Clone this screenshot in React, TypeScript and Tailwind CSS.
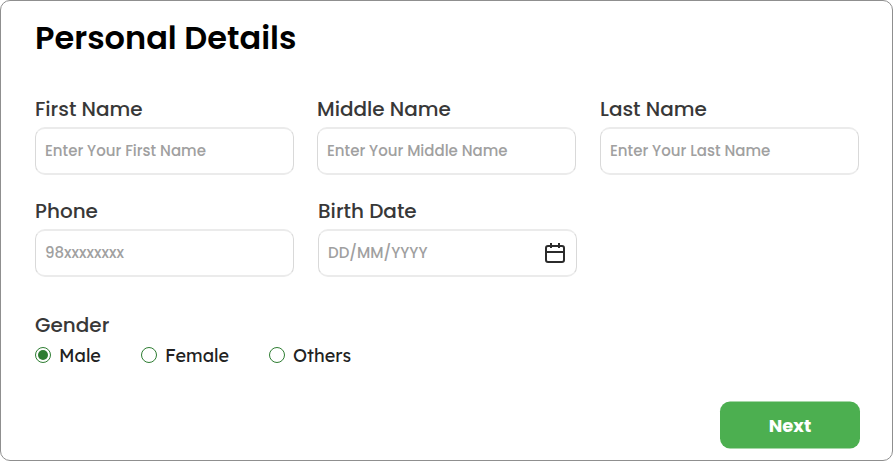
import type { ReactNode } from 'react';

type FieldProps = {
  label: string;
  placeholder: string;
  children?: ReactNode;
};

function Field({ label, placeholder, children }: FieldProps) {
  return (
    <label className="block w-[259px]">
      <span className="block h-[30px] whitespace-nowrap text-[20px] leading-[30px] font-medium text-[#383838]">{label}</span>
      <span className="mt-[3px] flex h-12 items-center rounded-[10px] border-x border-y-2 border-x-[#d9d9d9] border-y-[#ebebeb] pr-[11px] pl-[9px]">
        <input
          className="mb-0.5 h-6 w-0 min-w-0 flex-1 bg-transparent text-[15px] font-medium outline-none placeholder:text-[#a0a0a0]"
          placeholder={placeholder}
        />
        {children}
      </span>
    </label>
  );
}

function CalendarIcon() {
  return (
    <svg className="size-5 shrink-0" viewBox="0 0 20 20" fill="none" stroke="#2b2b2b" strokeWidth="2">
      <rect x="1" y="3" width="18" height="16" rx="2" />
      <path d="M1 9H19M6 0V5M14 0V5" />
    </svg>
  );
}

function Radio({ label, checked, className }: { label: string; checked?: boolean; className: string }) {
  return (
    <label className={`flex items-center gap-2 whitespace-nowrap ${className}`}>
      <svg className="size-4 shrink-0" viewBox="0 0 16 16" fill="none">
        <circle cx="8" cy="8" r="7.5" stroke="#2e7d32" />
        {checked && <circle cx="8" cy="8" r="5" fill="#2e7d32" />}
      </svg>
      <span className="pt-0.5 font-['Lexend','Outfit','Poppins',sans-serif] text-[18px] leading-[22px] font-normal text-[#222]">{label}</span>
    </label>
  );
}

export default function App() {
  return (
    <form className="h-[461px] w-[893px] rounded-[10px] border border-[#8f8f8f] bg-white pt-[13px] pl-[34px] font-['Poppins','Inter',sans-serif]">
      <h1 className="h-12 text-[32px] leading-12 font-semibold text-black">Personal Details</h1>
      <div className="mt-8 flex">
        <Field label="First Name" placeholder="Enter Your First Name" />
        <div className="mr-6 ml-[23px]">
          <Field label="Middle Name" placeholder="Enter Your Middle Name" />
        </div>
        <Field label="Last Name" placeholder="Enter Your Last Name" />
      </div>
      <div className="mt-[21px] flex gap-6">
        <Field label="Phone" placeholder="98xxxxxxxx" />
        <Field label="Birth Date" placeholder="DD/MM/YYYY">
          <CalendarIcon />
        </Field>
      </div>
      <fieldset className="mt-[33px]">
        <legend className="h-[30px] text-[20px] leading-[30px] font-medium text-[#383838]">Gender</legend>
        <div className="mt-[3px] flex h-6">
          <Radio label="Male" checked className="w-[106px]" />
          <Radio label="Female" className="w-[128px]" />
          <Radio label="Others" className="w-[90px]" />
        </div>
      </fieldset>
      <button type="button" className="mt-[34px] ml-[685px] block h-[47px] w-[140px] translate-y-[0.5px] rounded-[10px] bg-[#4caf50] pb-px text-[18px] font-bold text-white">
        Next
      </button>
    </form>
  );
}
